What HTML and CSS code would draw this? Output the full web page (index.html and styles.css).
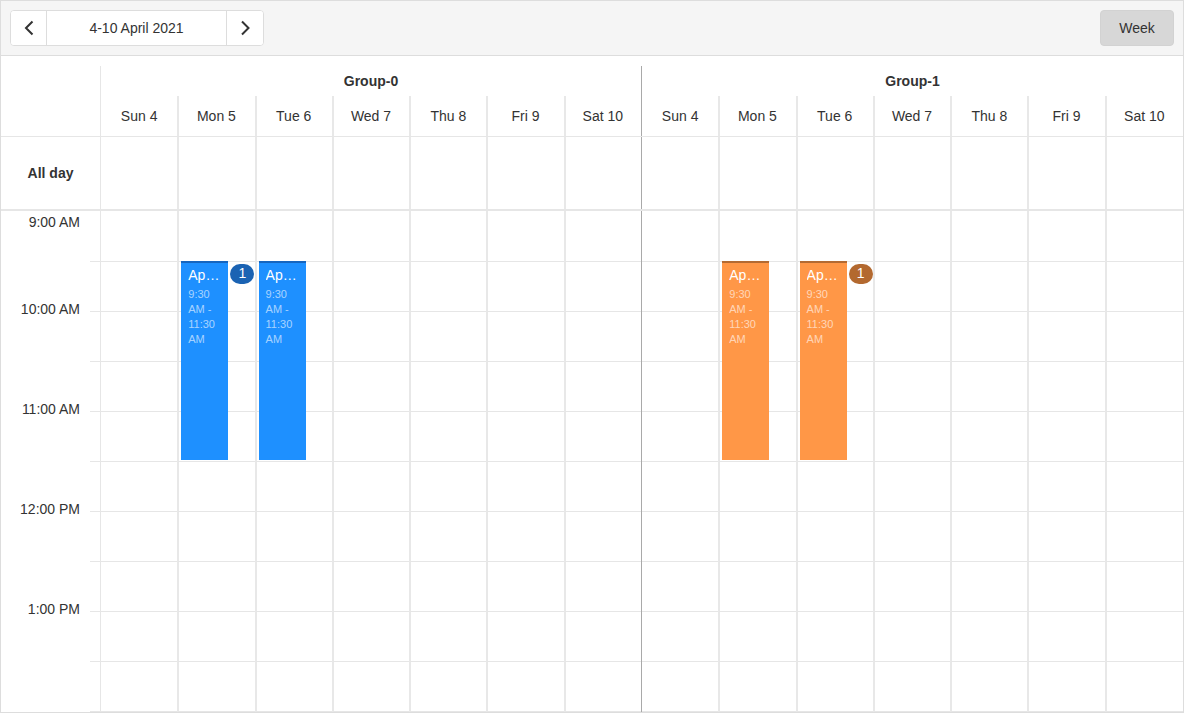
FILE: index.html
```html
<!DOCTYPE html>
<html lang="en">
<head>
<meta charset="utf-8">
<title>Scheduler</title>
<link rel="stylesheet" href="styles.css">
</head>
<body>
<div class="scheduler">
  <div class="toolbar">
    <div class="nav">
      <button class="nav-btn" aria-label="Previous">
        <svg width="16" height="16" viewBox="0 0 16 16"><path d="M11.5 1.5 L5 8 L11.5 14.5" fill="none" stroke="#333" stroke-width="2"/></svg>
      </button>
      <div class="nav-date">4-10 April 2021</div>
      <button class="nav-btn" aria-label="Next">
        <svg width="16" height="16" viewBox="0 0 16 16"><path d="M5 1.5 L11.5 8 L5 14.5" fill="none" stroke="#333" stroke-width="2"/></svg>
      </button>
    </div>
    <button class="view-btn">Week</button>
  </div>

  <div class="head">
    <div class="corner"></div>
    <div class="group g0">Group-0</div>
    <div class="group g1">Group-1</div>
    <div class="day">Sun 4</div>
    <div class="day">Mon 5</div>
    <div class="day">Tue 6</div>
    <div class="day">Wed 7</div>
    <div class="day">Thu 8</div>
    <div class="day">Fri 9</div>
    <div class="day end0">Sat 10</div>
    <div class="day">Sun 4</div>
    <div class="day">Mon 5</div>
    <div class="day">Tue 6</div>
    <div class="day">Wed 7</div>
    <div class="day">Thu 8</div>
    <div class="day">Fri 9</div>
    <div class="day last">Sat 10</div>
  </div>

  <div class="allday">
    <div class="allday-label">All day</div>
    <div class="cell"></div><div class="cell"></div><div class="cell"></div><div class="cell"></div><div class="cell"></div><div class="cell"></div><div class="cell end0"></div>
    <div class="cell"></div><div class="cell"></div><div class="cell"></div><div class="cell"></div><div class="cell"></div><div class="cell"></div><div class="cell last"></div>
  </div>

  <div class="body">
    <div class="times">
      <div class="tslot first"><span>9:00 AM</span></div>
      <div class="tslot"><span>10:00 AM</span></div>
      <div class="tslot"></div>
      <div class="tslot"><span>11:00 AM</span></div>
      <div class="tslot"></div>
      <div class="tslot"><span>12:00 PM</span></div>
      <div class="tslot"></div>
      <div class="tslot"><span>1:00 PM</span></div>
      <div class="tslot"></div>
      <div class="tslot"></div>
    </div>

    <div class="col"><div class="slots"><i></i><i></i><i></i><i></i><i></i><i></i><i></i><i></i><i></i><i></i></div></div>
    <div class="col">
      <div class="slots"><i></i><i></i><i></i><i></i><i></i><i></i><i></i><i></i><i></i><i></i></div>
      <div class="appt blue"><div class="appt-title">Appointment</div><div class="appt-time">9:30 AM - 11:30 AM</div></div>
      <div class="badge blue-badge">1</div>
    </div>
    <div class="col">
      <div class="slots"><i></i><i></i><i></i><i></i><i></i><i></i><i></i><i></i><i></i><i></i></div>
      <div class="appt blue"><div class="appt-title">Appointment</div><div class="appt-time">9:30 AM - 11:30 AM</div></div>
    </div>
    <div class="col"><div class="slots"><i></i><i></i><i></i><i></i><i></i><i></i><i></i><i></i><i></i><i></i></div></div>
    <div class="col"><div class="slots"><i></i><i></i><i></i><i></i><i></i><i></i><i></i><i></i><i></i><i></i></div></div>
    <div class="col"><div class="slots"><i></i><i></i><i></i><i></i><i></i><i></i><i></i><i></i><i></i><i></i></div></div>
    <div class="col end0"><div class="slots"><i></i><i></i><i></i><i></i><i></i><i></i><i></i><i></i><i></i><i></i></div></div>

    <div class="col"><div class="slots"><i></i><i></i><i></i><i></i><i></i><i></i><i></i><i></i><i></i><i></i></div></div>
    <div class="col">
      <div class="slots"><i></i><i></i><i></i><i></i><i></i><i></i><i></i><i></i><i></i><i></i></div>
      <div class="appt orange"><div class="appt-title">Appointment</div><div class="appt-time">9:30 AM - 11:30 AM</div></div>
    </div>
    <div class="col">
      <div class="slots"><i></i><i></i><i></i><i></i><i></i><i></i><i></i><i></i><i></i><i></i></div>
      <div class="appt orange"><div class="appt-title">Appointment</div><div class="appt-time">9:30 AM - 11:30 AM</div></div>
      <div class="badge orange-badge">1</div>
    </div>
    <div class="col"><div class="slots"><i></i><i></i><i></i><i></i><i></i><i></i><i></i><i></i><i></i><i></i></div></div>
    <div class="col"><div class="slots"><i></i><i></i><i></i><i></i><i></i><i></i><i></i><i></i><i></i><i></i></div></div>
    <div class="col"><div class="slots"><i></i><i></i><i></i><i></i><i></i><i></i><i></i><i></i><i></i><i></i></div></div>
    <div class="col last"><div class="slots"><i></i><i></i><i></i><i></i><i></i><i></i><i></i><i></i><i></i><i></i></div></div>
  </div>
</div>
</body>
</html>
```

FILE: styles.css
```css
* { box-sizing: border-box; }

html, body {
  margin: 0;
  padding: 0;
  background: #fff;
}

.scheduler {
  width: 1184px;
  height: 713px;
  border: 1px solid #dddddd;
  overflow: hidden;
  font-family: "Liberation Sans", Arial, sans-serif;
  font-size: 14px;
  color: #333;
  display: flex;
  flex-direction: column;
}

/* Toolbar */
.toolbar {
  flex: none;
  height: 55px;
  padding: 0 9px;
  background: #f5f5f5;
  border-bottom: 1px solid #dddddd;
  display: flex;
  align-items: center;
  justify-content: space-between;
}

.nav {
  display: flex;
  height: 36px;
  border: 1px solid #dddddd;
  border-radius: 4px;
  background: #fff;
  overflow: hidden;
}

.nav-btn {
  width: 36px;
  height: 34px;
  padding: 0;
  border: 0;
  background: #fff;
  display: flex;
  align-items: center;
  justify-content: center;
  font: inherit;
}

.nav-btn:first-child { border-right: 1px solid #dddddd; }

.nav-date {
  width: 180px;
  border-right: 1px solid #dddddd;
  display: flex;
  align-items: center;
  justify-content: center;
  color: #333;
}

.view-btn {
  width: 74px;
  height: 36px;
  border: 1px solid #d2d2d2;
  border-radius: 4px;
  background: #d7d7d7;
  color: #333;
  font: inherit;
  font-size: 14px;
  padding: 0;
}

/* Shared grid */
.head, .allday, .body {
  display: grid;
  grid-template-columns: 100px repeat(14, minmax(0, 1fr));
}

/* Header */
.head {
  flex: none;
  margin-top: 10px;
  grid-template-rows: 30px 40px;
  border-bottom: 1px solid #e6e6e6;
}

.corner {
  grid-row: 1 / 3;
  grid-column: 1;
  border-right: 1px solid #e6e6e6;
}

.group {
  grid-column: span 7;
  display: flex;
  align-items: center;
  justify-content: center;
  font-weight: bold;
  color: #333;
}

.group.g0 { border-right: 1px solid #a9a9a9; }

.day {
  display: flex;
  align-items: center;
  justify-content: center;
  border-right: 1px solid #e8e8e8;
  box-shadow: 1px 0 0 #e8e8e8;
}

.day.end0 { border-right: 1px solid #a9a9a9; box-shadow: none; }
.day.last { border-right: 0; box-shadow: none; }

/* All day row */
.allday {
  flex: none;
  height: 74px;
  border-bottom: 2px solid #e6e6e6;
}

.allday-label {
  display: flex;
  align-items: center;
  justify-content: center;
  font-weight: bold;
  border-right: 1px solid #e6e6e6;
}

.cell { border-right: 1px solid #e8e8e8; box-shadow: 1px 0 0 #e8e8e8; }
.cell.end0 { border-right: 1px solid #a9a9a9; box-shadow: none; }
.cell.last { border-right: 0; box-shadow: none; }

/* Body */
.body {
  flex: none;
  height: 501px;
}

.times {
  padding-top: 1px;
  border-right: 1px solid #e6e6e6;
}

.tslot {
  height: 50px;
  padding-right: 20px;
  text-align: right;
  line-height: 16px;
  padding-top: 39px;
  background: linear-gradient(#e6e6e6, #e6e6e6) no-repeat right bottom / 10px 1px;
}

.tslot.first { padding-top: 2px; }

.tslot span { display: block; white-space: nowrap; }

.col {
  position: relative;
  padding-top: 1px;
  border-right: 1px solid #e8e8e8;
  box-shadow: 1px 0 0 #e8e8e8;
}

.col.end0 { border-right: 1px solid #a9a9a9; box-shadow: none; }
.col.last { border-right: 0; box-shadow: none; }

.slots i {
  display: block;
  height: 50px;
  border-bottom: 1px solid #e6e6e6;
}

/* Appointments */
.appt {
  position: absolute;
  z-index: 1;
  top: 50px;
  left: 3px;
  width: 47px;
  height: 199px;
  padding: 2px 7px 0;
  border-top: 2px solid;
  color: #fff;
  overflow: hidden;
}

.appt.blue { background: #1e90ff; border-top-color: #1565bf; }
.appt.orange { background: #ff9747; border-top-color: #b36a32; }

.appt-title {
  font-size: 14px;
  line-height: 20px;
  white-space: nowrap;
  overflow: hidden;
  text-overflow: ellipsis;
}

.appt-time {
  margin-top: 2px;
  font-size: 11px;
  line-height: 15px;
  color: rgba(255, 255, 255, 0.62);
}

.badge {
  position: absolute;
  z-index: 1;
  top: 53px;
  left: 52px;
  width: 24px;
  height: 20px;
  border-radius: 10px;
  color: #fff;
  font-size: 14px;
  line-height: 19px;
  text-align: center;
}

.blue-badge { background: #1b63b3; }
.orange-badge { background: #b3692f; }
```
